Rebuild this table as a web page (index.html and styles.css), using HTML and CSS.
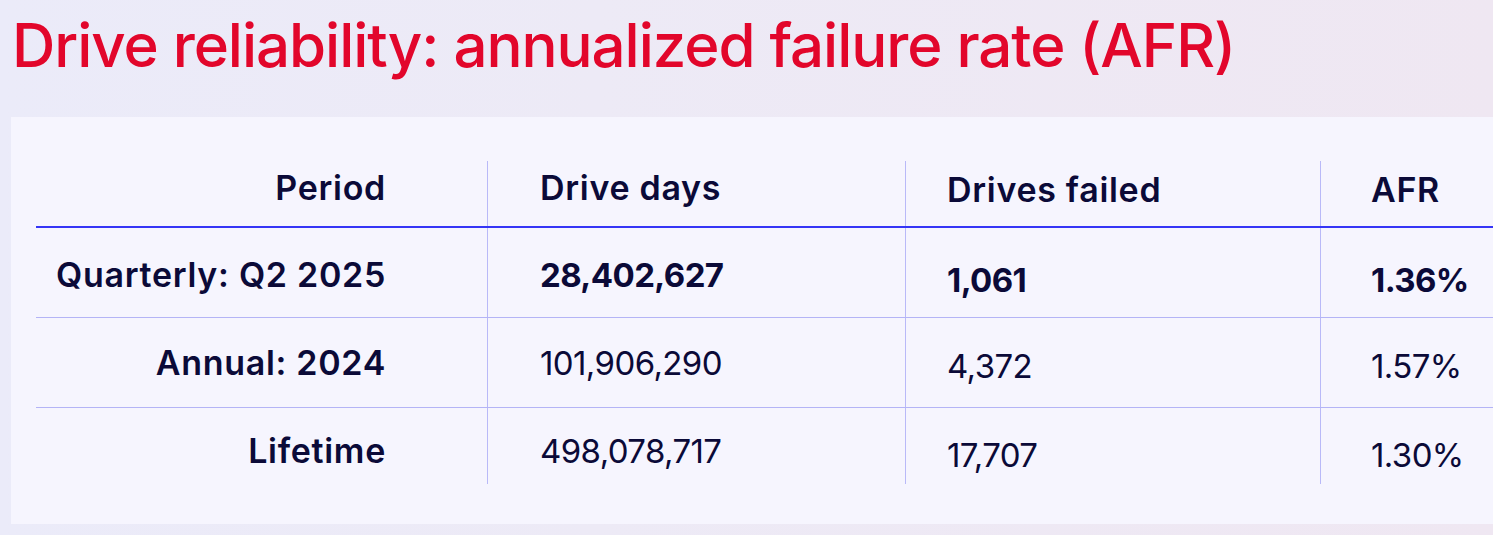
FILE: index.html
```html
<!DOCTYPE html>
<html lang="en">
<head>
<meta charset="utf-8">
<title>Drive reliability</title>
<link rel="stylesheet" href="styles.css">
</head>
<body>
<header class="top">
  <h1 class="title">Drive reliability: annualized failure rate (AFR)</h1>
</header>
<section class="card">
  <div class="table">
    <div class="row head">
      <div class="cell c1">Period</div>
      <div class="cell c2">Drive days</div>
      <div class="cell c3">Drives failed</div>
      <div class="cell c4">AFR</div>
    </div>
    <div class="row r1">
      <div class="cell c1">Quarterly: Q2 2025</div>
      <div class="cell c2 num strong">28,402,627</div>
      <div class="cell c3 num strong">1,061</div>
      <div class="cell c4 num strong">1.36%</div>
    </div>
    <div class="row r2">
      <div class="cell c1">Annual: 2024</div>
      <div class="cell c2 num">101,906,290</div>
      <div class="cell c3 num">4,372</div>
      <div class="cell c4 num">1.57%</div>
    </div>
    <div class="row r3">
      <div class="cell c1">Lifetime</div>
      <div class="cell c2 num">498,078,717</div>
      <div class="cell c3 num">17,707</div>
      <div class="cell c4 num">1.30%</div>
    </div>
  </div>
</section>
</body>
</html>
```
FILE: styles.css
```css
html, body {
  margin: 0;
  padding: 0;
}
body {
  width: 1493px;
  height: 535px;
  overflow: hidden;
  background: linear-gradient(90deg, #ebebf9 0%, #edeaf6 40%, #efe7f2 100%);
  font-family: Inter, "Noto Sans", sans-serif;
  color: #0b0a38;
}
.top {
  height: 117px;
  box-sizing: border-box;
  padding: 15px 0 0 12px;
}
.title {
  margin: 0;
  font-size: 60px;
  line-height: 60px;
  font-weight: 500;
  color: #e2062b;
  letter-spacing: -1.05px;
  white-space: nowrap;
}
.card {
  margin-left: 11px;
  width: 1600px;
  height: 407px;
  box-sizing: border-box;
  background: #f6f5fe;
  padding: 44px 0 0 25px;
}
.table {
  display: flex;
  flex-direction: column;
}
.row {
  display: grid;
  grid-template-columns: 451px 418px 415px 1fr;
  box-sizing: border-box;
}
.cell {
  font-size: 34px;
  line-height: 40px;
  letter-spacing: 0.7px;
  font-weight: 600;
  white-space: nowrap;
  box-sizing: border-box;
}
.cell.num {
  font-size: 33px;
  letter-spacing: -0.6px;
  font-weight: 400;
}
.cell.num.strong { font-weight: 700; }
.c2, .c3, .c4 {
  border-left: 1px solid #b9b9f8;
}
.c1 {
  text-align: right;
  padding-right: 101px;
}
.c2 { padding-left: 52px; }
.c3 { padding-left: 41px; }
.c4 { padding-left: 50px; }
.head {
  height: 67px;
  border-bottom: 2px solid #3535f6;
}
.head .cell { padding-top: 7px; }
.head .c3, .head .c4 { padding-top: 9px; }
.r1 { height: 90px; border-bottom: 1px solid #b4b4f6; }
.r1 .cell { padding-top: 27px; }
.r1 .c3, .r1 .c4 { padding-top: 32px; }
.r2 { height: 90px; border-bottom: 1px solid #b4b4f6; }
.r2 .cell { padding-top: 25px; }
.r2 .c3, .r2 .c4 { padding-top: 28px; }
.r3 { height: 76px; }
.r3 .cell { padding-top: 23px; }
.r3 .c3, .r3 .c4 { padding-top: 27px; }
```
